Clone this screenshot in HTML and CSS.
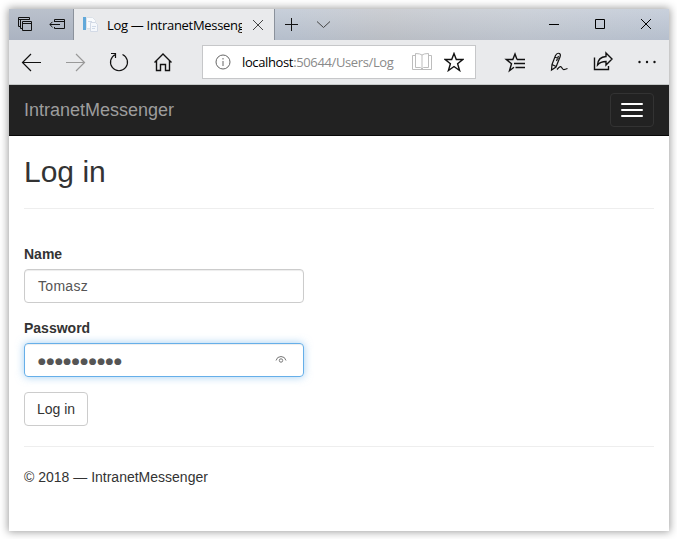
FILE: index.html
```html
<!DOCTYPE html>
<html lang="en">
<head>
<meta charset="utf-8">
<title>Log in</title>
<link rel="stylesheet" href="styles.css">
</head>
<body>
<div class="window">
  <div class="titlebar">
    <div class="tab-tools">
      <svg width="64" height="31" viewBox="0 0 64 31">
        <path d="M11 17.500H9.500v-9h11v2M9.500 10.500h11M13 19.500h-1.500v-9h9M13.500 12.500h9v9h-9zM13.500 14.500h9"/>
        <path d="M45.500 13v-2.500h10v9h-10V18M45.500 12.500h10M41 15.500h10M43.500 12.800l-2.700 2.700 2.700 2.700"/>
      </svg>
    </div>
    <div class="tab">
      <svg class="favicon" width="17" height="17" viewBox="0 0 17 17">
        <path fill="#62a9da" d="M1 1h3v13H1z"/>
        <path fill="#f9fbfd" stroke="#dbe1e8" d="M4.500 1.500h6l3 3v8h-9z"/>
        <path fill="#f5f8fc" stroke="#d3dae6" d="M8.500 6.500h5l2 2v7h-7z"/>
        <path stroke="#d0dae8" d="M6 5.500h4M10 10.500h4M10 12.500h3"/>
      </svg>
      <span class="tab-title">Log — IntranetMessenger</span>
      <svg class="tab-close" width="12" height="12" viewBox="0 0 12 12"><path d="M1 1l10 10M11 1L1 11"/></svg>
    </div>
    <div class="tab-actions">
      <svg width="64" height="31" viewBox="0 0 64 31"><path d="M10 15.500h13M16.500 9v13"/><path class="thin" d="M42 12.500l6.500 6 6.500-6"/></svg>
    </div>
    <div class="window-buttons">
      <svg width="46" height="31" viewBox="0 0 46 31"><path d="M18 15.500h10"/></svg>
      <svg width="46" height="31" viewBox="0 0 46 31"><path d="M18.500 10.500h9v9h-9z"/></svg>
      <svg width="46" height="31" viewBox="0 0 46 31"><path d="M18 10l10 10M28 10L18 20"/></svg>
    </div>
  </div>
  <div class="toolbar">
    <div class="nav-buttons">
      <svg width="44" height="44" viewBox="0 0 44 44"><path class="medium" d="M31 22.500H13M21 14l-8.500 8.500L21 31"/></svg>
      <svg class="disabled" width="44" height="44" viewBox="0 0 44 44"><path class="medium" d="M12 22.500h18M22 14l8.500 8.500L22 31"/></svg>
      <svg width="44" height="44" viewBox="0 0 44 44"><path class="medium" d="M17.500 14.500A8.500 8.500 0 1 0 24.500 14.500M13 13.500h4.500V18"/></svg>
      <svg width="44" height="44" viewBox="0 0 44 44"><path class="bold" d="M12.500 22.500L21 14l8.500 8.500M14.500 20.500v10h4v-6h5v6h4v-10"/></svg>
    </div>
    <div class="address">
      <svg class="info" width="16" height="16" viewBox="0 0 16 16"><circle cx="8" cy="8" r="7"/><path d="M8 7v5M8 4v1.500"/></svg>
      <span class="url"><span class="host">localhost</span>:50644/Users/Log</span>
      <svg class="reader" width="20" height="20" viewBox="0 0 20 20"><path d="M3.500 3.500h-3v14h19v-14h-3M10 3v14.500M10 3Q8 1.500 3.500 1.500v14H8.500L10 17l1.500-1.500h5v-14Q12 1.500 10 3"/></svg>
      <svg class="star" width="20" height="20" viewBox="0 0 20 20"><path class="bold" d="M10 1.500l2.300 6h6.500l-5.200 4.200 2 6.800-5.600-4-5.600 4 2-6.800-5.200-4.200h6.500z"/></svg>
    </div>
    <div class="page-buttons">
      <svg width="44" height="44" viewBox="0 0 44 44"><path class="bold" d="M24 19.500l-2-5.500-2.200 5.500h-6.500l5.200 4.200-2 7 4.500-3.500M24 19.500h8M21 23.500h11M22.500 27.500h9.500"/></svg>
      <svg width="44" height="44" viewBox="0 0 44 44"><path class="medium" d="M15 24.500l3.500-9q1.500-3 4-2 1.500 1 .500 3.500l-4 10-4.500 3zM17.500 17l4 1.500M15 24.500l4 2M21.500 16l-2 5M20 29.500c3-3.500 4-3.500 5-1.500s2 2 5.500 .500"/></svg>
      <svg width="44" height="44" viewBox="0 0 44 44"><path class="bold" d="M13.500 17.500v12h14V26M25 13l6 6-6 6v-3.500q-5.500 0-8.500 3.500 .500-8 8.500-8.500z"/></svg>
      <svg width="44" height="44" viewBox="0 0 44 44"><g class="dots"><circle cx="14.500" cy="22" r="1.200"/><circle cx="22" cy="22" r="1.200"/><circle cx="29.500" cy="22" r="1.200"/></g></svg>
    </div>
  </div>
  <nav class="navbar">
    <a class="brand">IntranetMessenger</a>
    <button class="toggle" aria-label="Menu"><span></span><span></span><span></span></button>
  </nav>
  <main class="content">
    <h2>Log in</h2>
    <hr>
    <form>
      <label>Name</label>
      <div class="field"><span class="value">Tomasz</span></div>
      <label>Password</label>
      <div class="field focused"><span class="mask">●●●●●●●●●●</span>
        <svg width="12" height="10" viewBox="0 0 12 10"><path d="M1 5.500Q2 1.500 6 1.500t5 4"/><circle cx="6" cy="5.500" r="1.700"/></svg>
      </div>
      <button class="submit" type="button">Log in</button>
    </form>
    <hr>
    <footer>© 2018 — IntranetMessenger</footer>
  </main>
</div>
</body>
</html>
```
FILE: styles.css
```css
* { box-sizing: border-box; }
body {
  margin: 0;
  padding: 9px 8px 8px 9px;
  background: #fff;
  color: #333;
  font: 14px/20px "Liberation Sans", sans-serif;
  overflow: hidden;
}
svg { display: block; flex: none; fill: none; stroke: #111; stroke-width: 1; }
.medium { stroke-width: 1.2; }
.bold { stroke-width: 1.4; }
.thin { stroke: #444; }
.window {
  width: 660px;
  height: 522px;
  background: #fff;
  box-shadow: 0 0 8px 1px rgba(0, 0, 0, .38);
}
.titlebar {
  display: flex;
  height: 31px;
  background:
    linear-gradient(rgba(255, 255, 255, .18), rgba(120, 130, 145, .1)),
    linear-gradient(90deg, #b9c1ce 0, #bcc5d2 42%, #c1c4ca 57%, #c3c9d2 78%, #bdc6d4 100%);
}
.tab-tools { background: linear-gradient(#bac1cc, #abb3c1); }
.tab {
  display: flex;
  align-items: center;
  width: 202px;
  padding-left: 8px;
  border: solid #8b929c;
  border-width: 0 1px;
  background: #e9eaec;
}
.favicon { stroke: none; }
.tab-title {
  width: 135px;
  margin-left: 8px;
  overflow: hidden;
  white-space: nowrap;
  color: #000;
  font: 13px/20px "Open Sans", sans-serif;
  letter-spacing: -.3px;
}
.tab-close { margin-left: 10px; stroke: #444; }
.window-buttons { display: flex; margin-left: auto; }
.window-buttons svg { stroke: #000; }
.toolbar {
  display: flex;
  align-items: center;
  height: 45px;
  padding-left: 1px;
  border-bottom: 1px solid #c5c8c8;
  background: #e9eaec;
}
.nav-buttons, .page-buttons { display: flex; }
.disabled { stroke: #999; }
.address {
  display: flex;
  align-items: center;
  width: 274px;
  height: 34px;
  margin-left: 16px;
  padding-left: 12px;
  border: 1px solid #c6c7c9;
  background: #fff;
}
.info { stroke: #666; }
.url {
  width: 159px;
  margin-left: 11px;
  white-space: nowrap;
  color: #8a8a8a;
  font: 13px/20px "Open Sans", sans-serif;
  letter-spacing: -.37px;
}
.host { color: #000; }
.reader { margin-left: 11px; stroke: #bdbdbd; }
.star { margin-left: 12px; }
.page-buttons { margin-left: 17px; }
.dots { fill: #111; stroke: none; }
.navbar {
  display: flex;
  align-items: center;
  justify-content: space-between;
  height: 51px;
  padding: 0 15px;
  border-bottom: 1px solid #080808;
  background: #222;
}
.brand { color: #9d9d9d; font-size: 18px; }
.toggle {
  display: flex;
  flex-direction: column;
  align-items: center;
  justify-content: center;
  gap: 4px;
  width: 44px;
  height: 34px;
  padding: 0;
  border: 1px solid #333;
  border-radius: 4px;
  background: transparent;
}
.toggle span { width: 22px; height: 2px; border-radius: 1px; background: #fff; }
.content { padding: 19px 15px 0; }
h2 { margin: 0; font-size: 30px; font-weight: 500; line-height: 33px; }
hr { height: 1px; margin: 20px 0; border: 0; background: #eee; }
form { padding-top: 15px; }
label { display: block; margin-bottom: 5px; font-weight: bold; }
.field {
  display: flex;
  align-items: center;
  justify-content: space-between;
  width: 280px;
  height: 34px;
  margin-bottom: 15px;
  padding: 0 16px 0 13px;
  border: 1px solid #ccc;
  border-radius: 4px;
  box-shadow: inset 0 1px 1px rgba(0, 0, 0, .075);
  color: #555;
}
.field svg { stroke: #777; }
.value { letter-spacing: .3px; }
.focused {
  border-color: #66afe9;
  box-shadow: inset 0 1px 1px rgba(0, 0, 0, .075), 0 0 8px rgba(102, 175, 233, .6);
}
.mask { padding-top: 2px; font: 9px/20px "DejaVu Sans", sans-serif; letter-spacing: .6px; }
.submit {
  display: block;
  width: 64px;
  height: 34px;
  padding: 0;
  border: 1px solid #ccc;
  border-radius: 4px;
  background: #fff;
  color: #333;
  font: inherit;
}
```
